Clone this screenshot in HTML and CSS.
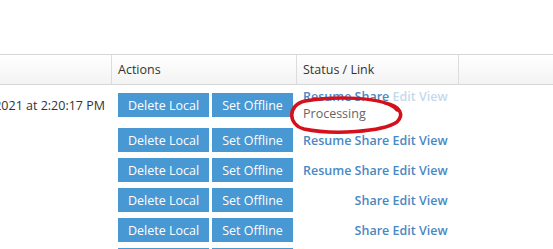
FILE: index.html
```html
<!DOCTYPE html>
<html>
  <head>
    <meta charset="UTF-8" />
    <title>Recordings</title>
    <link rel="stylesheet" href="styles.css">
  </head>

  <body>
    <div class="page">
      <table class="grid">
        <colgroup>
          <col class="col-date" />
          <col class="col-actions" />
          <col class="col-status" />
          <col />
        </colgroup>
        <thead>
          <tr>
            <th></th>
            <th>Actions</th>
            <th>Status / Link</th>
            <th></th>
          </tr>
        </thead>
        <tbody>
          <tr>
            <td class="date"><div class="date-text">8/10/2021 at 2:20:17 PM</div></td>
            <td>
              <div class="buttons">
                <button>Delete Local</button>
                <button>Set Offline</button>
              </div>
            </td>
            <td class="status">
              <div class="links">
                <a href="#">Resume</a>
                <a href="#">Share</a>
                <a href="#" class="disabled">Edit</a>
                <a href="#" class="disabled">View</a>
              </div>
              <div class="state">Processing</div>
            </td>
            <td></td>
          </tr>
          <tr>
            <td class="date"></td>
            <td>
              <div class="buttons">
                <button>Delete Local</button>
                <button>Set Offline</button>
              </div>
            </td>
            <td class="status">
              <div class="links">
                <a href="#">Resume</a>
                <a href="#">Share</a>
                <a href="#">Edit</a>
                <a href="#">View</a>
              </div>
            </td>
            <td></td>
          </tr>
          <tr>
            <td class="date"></td>
            <td>
              <div class="buttons">
                <button>Delete Local</button>
                <button>Set Offline</button>
              </div>
            </td>
            <td class="status">
              <div class="links">
                <a href="#">Resume</a>
                <a href="#">Share</a>
                <a href="#">Edit</a>
                <a href="#">View</a>
              </div>
            </td>
            <td></td>
          </tr>
          <tr>
            <td class="date"></td>
            <td>
              <div class="buttons">
                <button>Delete Local</button>
                <button>Set Offline</button>
              </div>
            </td>
            <td class="status">
              <div class="links">
                <a href="#" class="hidden">Resume</a>
                <a href="#">Share</a>
                <a href="#">Edit</a>
                <a href="#">View</a>
              </div>
            </td>
            <td></td>
          </tr>
          <tr>
            <td class="date"></td>
            <td>
              <div class="buttons">
                <button>Delete Local</button>
                <button>Set Offline</button>
              </div>
            </td>
            <td class="status">
              <div class="links">
                <a href="#" class="hidden">Resume</a>
                <a href="#">Share</a>
                <a href="#">Edit</a>
                <a href="#">View</a>
              </div>
            </td>
            <td></td>
          </tr>
          <tr>
            <td class="date"></td>
            <td>
              <div class="buttons">
                <button>Delete Local</button>
                <button>Set Offline</button>
              </div>
            </td>
            <td class="status">
              <div class="links">
                <a href="#" class="hidden">Resume</a>
                <a href="#">Share</a>
                <a href="#">Edit</a>
                <a href="#">View</a>
              </div>
            </td>
            <td></td>
          </tr>
        </tbody>
      </table>
    </div>

    <!-- hand-drawn annotation around the status -->
    <svg class="markup" width="553" height="249" viewBox="0 0 553 249">
      <path d="M397 110 C386 96 332 96 305 101 C287 105 288 125 304 129 C333 135 382 132 397 122 C404 115 401 106 385 103"
            fill="none" stroke="#d3101c" stroke-width="3.5" stroke-linecap="round" />
    </svg>
  </body>
</html>
```

FILE: styles.css
```css
body {
  font-family: "Open Sans", "Noto Sans", sans-serif;
  font-size: 12.5px;
  color: #333;
  margin: 0;
  padding: 0;
  overflow: hidden;
}

.page {
  padding-top: 54px;
}

.grid {
  width: 100%;
  table-layout: fixed;
  border-collapse: separate;
  border-spacing: 0;
}

.col-date {
  width: 111px;
}

.col-actions {
  width: 185px;
}

.col-status {
  width: 162px;
}

.grid th,
.grid td {
  padding: 3px 6px;
  line-height: 17px;
  vertical-align: middle;
  white-space: nowrap;
  text-align: left;
  border-left: 1px solid transparent;
}

.grid th:first-child,
.grid td:first-child {
  border-left: none;
}

.grid th {
  font-weight: normal;
  padding-top: 6px;
  padding-bottom: 6px;
  background: linear-gradient(#ffffff, #f3f3f3);
  border-top: 1px solid #d6d6d6;
  border-bottom: 1px solid #d6d6d6;
  border-left-color: #dcdcdc;
}

.date {
  overflow: hidden;
  padding-right: 14px;
}

.date-text {
  display: flex;
  justify-content: flex-end;
}

.buttons {
  display: flex;
  gap: 3px;
}

.buttons button {
  height: 24px;
  padding: 0 10px;
  background-color: #4898d3;
  color: #fff;
  border: none;
  font-family: inherit;
  font-size: 12.5px;
  cursor: pointer;
}

.links a {
  color: #4a88c3;
  font-weight: 600;
  text-decoration: none;
}

.links a.disabled {
  color: #c6d9ec;
}

.links a.hidden {
  visibility: hidden;
}

.state {
  color: #666;
}

.markup {
  position: absolute;
  left: 0;
  top: 0;
  pointer-events: none;
}
```
